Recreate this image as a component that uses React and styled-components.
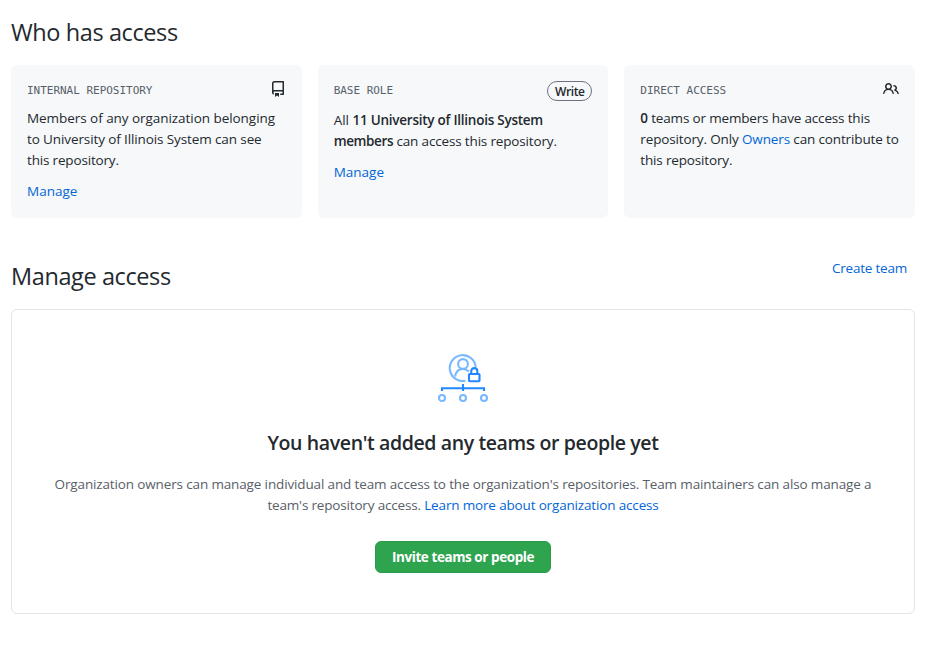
import React from 'react';
import styled, { createGlobalStyle } from 'styled-components';

const Global = createGlobalStyle`
  * { box-sizing: border-box; }
  body { margin: 0; background: #fff; color: #24292e; font: 13.5px/21px "Open Sans", "Noto Sans", sans-serif; }
  h2, h3, p { margin: 0; }
`;

const spacing = (p) => (p.$spacing === undefined ? '' : `letter-spacing: ${p.$spacing}px;`);

const Page = styled.main`
  width: 931px;
  height: 652px;
  padding: 14px 16px 0 11px;
  overflow: hidden;
`;
const Heading = styled.h2`
  font-size: 23.5px;
  font-weight: 400;
  line-height: 36px;
  letter-spacing: -0.4px;
`;
const Cards = styled.section`
  display: grid;
  grid-template-columns: repeat(3, minmax(0, 1fr));
  gap: 16px;
  margin-top: 15px;
`;
const Card = styled.article`
  height: 153px;
  padding: 16px;
  border-radius: 6px;
  background: #f6f8fa;
`;
const CardHeader = styled.header`
  display: flex;
  justify-content: space-between;
  height: ${(p) => p.$height}px;
  margin-bottom: 9px;
`;
const Label = styled.span`
  font: 11px/20px "DejaVu Sans Mono", monospace;
  letter-spacing: -0.02px;
  color: #586069;
  text-transform: uppercase;
`;
const Badge = styled.span`
  height: 20px;
  width: 45px;
  border: 1px solid #6a737d;
  border-radius: 10px;
  font-size: 12px;
  font-weight: 600;
  line-height: 19px;
  text-align: center;
  letter-spacing: -0.4px;
`;
const Line = styled.span`
  display: block;
  white-space: nowrap;
  ${spacing}
`;
const Strong = styled.strong`
  font-weight: 600;
  ${spacing}
`;
const Link = styled.a`
  color: #0366d6;
  text-decoration: none;
  ${spacing}
`;
const CardAction = styled.p`
  margin-top: 10px;
`;
const ManageHeader = styled.header`
  display: flex;
  justify-content: space-between;
  margin-top: 40px;
  padding-right: 8px;
`;
const Blankslate = styled.section`
  display: flex;
  flex-direction: column;
  align-items: center;
  height: 305px;
  margin-top: 15px;
  padding-top: 43px;
  border: 1px solid #e1e4e8;
  border-radius: 6px;
  text-align: center;
`;
const Title = styled.h3`
  margin-top: 23px;
  font-size: 19.5px;
  font-weight: 600;
  line-height: 30px;
  letter-spacing: -0.38px;
`;
const Description = styled.p`
  margin-top: 16px;
  color: #586069;
`;
const Button = styled.button`
  width: 176px;
  height: 32px;
  margin-top: 25px;
  padding: 0;
  border: 1px solid #2c9c4b;
  border-radius: 6px;
  background: #2ea44f;
  color: #fff;
  font: 700 13.5px/20px "Open Sans", sans-serif;
  letter-spacing: -0.43px;
  white-space: nowrap;
`;
const Octicon = styled.svg`
  width: 16px;
  height: 16px;
  fill: #24292e;
`;
const Illustration = styled.svg`
  width: 52px;
  height: 52px;
  fill: none;
  stroke: #79b8ff;
  stroke-width: 2.1;
`;

const RepoIcon = () => (
  <Octicon viewBox="0 0 16 16"><path fillRule="evenodd" d="M2 2.5A2.5 2.5 0 014.5 0h8.75a.75.75 0 01.75.75v12.5a.75.75 0 01-.75.75h-2.5a.75.75 0 110-1.5h1.75v-2h-8a1 1 0 00-.714 1.7.75.75 0 01-1.072 1.05A2.495 2.495 0 012 11.5v-9zm10.5-1V9h-8c-.356 0-.694.074-1 .208V2.5a1 1 0 011-1h8zM5 12.25v3.25a.25.25 0 00.4.2l1.45-1.087a.25.25 0 01.3 0L8.6 15.7a.25.25 0 00.4-.2v-3.25a.25.25 0 00-.25-.25h-3.5a.25.25 0 00-.25.25z" /></Octicon>
);
const PeopleIcon = () => (
  <Octicon viewBox="0 0 16 16"><path fillRule="evenodd" d="M5.5 3.5a2 2 0 100 4 2 2 0 000-4zM2 5.5a3.5 3.5 0 115.898 2.549 5.507 5.507 0 013.034 4.084.75.75 0 11-1.482.235 4.001 4.001 0 00-7.9 0 .75.75 0 01-1.482-.236A5.507 5.507 0 013.102 8.05 3.49 3.49 0 012 5.5zM11 4a.75.75 0 100 1.5 1.5 1.5 0 01.666 2.844.75.75 0 00-.416.672v.352a.75.75 0 00.574.73c1.2.289 2.162 1.2 2.522 2.372a.75.75 0 101.434-.44 5.01 5.01 0 00-2.56-3.012A3 3 0 0011 4z" /></Octicon>
);
const PermissionsIcon = () => (
  <Illustration viewBox="0 0 52 52">
    <path d="M38.7 14A13 13 0 1 0 28.5 27.8" />
    <circle cx="26" cy="11" r="4.9" />
    <path d="M18.2 23.5C18.8 18.5 21.8 16 26 16c2.4 0 4.4 1 5.8 2.4" />
    <g stroke="#2188ff">
      <rect x="32" y="21" width="10.5" height="7.3" rx="0.7" />
      <path d="M34.2 20.7v-2.5a3.05 3.05 0 0 1 6.1 0v2.5M26 31v7M5 38v-2.8h42V38" />
    </g>
    <circle cx="5" cy="45" r="3" />
    <circle cx="26" cy="45" r="3" />
    <circle cx="47" cy="45" r="3" />
  </Illustration>
);

export default function App() {
  return (
    <Page>
      <Global />
      <Heading>Who has access</Heading>
      <Cards>
        <Card>
          <CardHeader $height={18}><Label>Internal repository</Label><RepoIcon /></CardHeader>
          <p>
            <Line $spacing={-0.05}>Members of any organization belonging</Line>
            <Line $spacing={-0.11}>to University of Illinois System can see</Line>
            <Line $spacing={-0.17}>this repository.</Line>
          </p>
          <CardAction><Link>Manage</Link></CardAction>
        </Card>
        <Card>
          <CardHeader $height={20}><Label>Base role</Label><Badge>Write</Badge></CardHeader>
          <p>
            <Line>All <Strong $spacing={-0.25}>11 University of Illinois System</Strong></Line>
            <Line $spacing={-0.16}><Strong $spacing={-0.38}>members</Strong> can access this repository.</Line>
          </p>
          <CardAction><Link>Manage</Link></CardAction>
        </Card>
        <Card>
          <CardHeader $height={18}><Label>Direct access</Label><PeopleIcon /></CardHeader>
          <p>
            <Line $spacing={-0.17}><Strong>0</Strong> teams or members have access this</Line>
            <Line $spacing={-0.14}>repository. Only <Link>Owners</Link> can contribute to</Line>
            <Line $spacing={-0.16}>this repository.</Line>
          </p>
        </Card>
      </Cards>
      <ManageHeader><Heading>Manage access</Heading><Link $spacing={-0.22}>Create team</Link></ManageHeader>
      <Blankslate>
        <PermissionsIcon />
        <Title>You haven't added any teams or people yet</Title>
        <Description>
          <Line $spacing={-0.14}>Organization owners can manage individual and team access to the organization's repositories. Team maintainers can also manage a</Line>
          <Line $spacing={-0.17}>team's repository access. <Link $spacing={-0.16}>Learn more about organization access</Link></Line>
        </Description>
        <Button>Invite teams or people</Button>
      </Blankslate>
    </Page>
  );
}
